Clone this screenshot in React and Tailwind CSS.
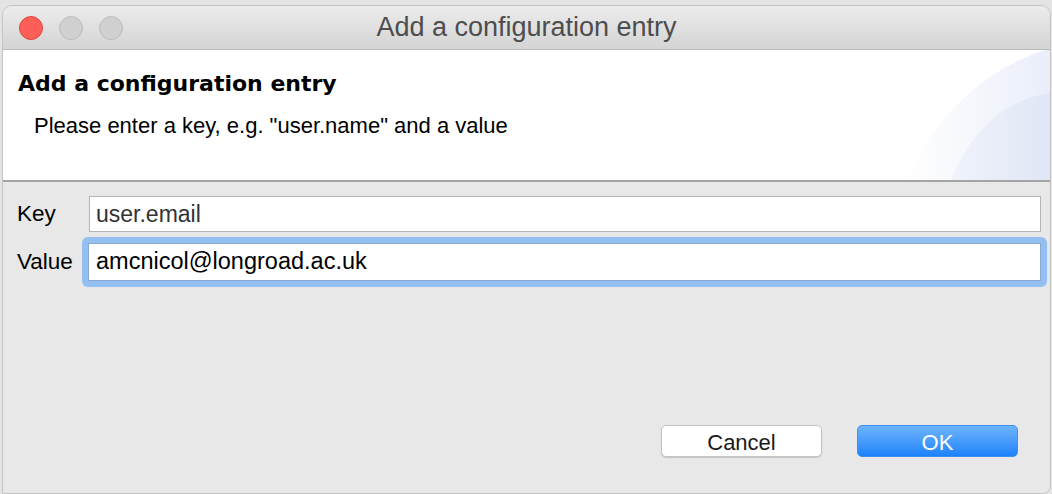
import React from 'react';

const sans = { fontFamily: '"Liberation Sans", Arial, sans-serif' };

function Light({ color, border }) {
  return <span className={`block w-[24px] h-[24px] rounded-full border ${color} ${border}`} />;
}

export default function App() {
  return (
    <div className="w-[1052px] h-[494px] bg-[#e4e4e4] overflow-hidden pt-[5px] pl-[2px]" style={sans}>
      <div className="w-[1049px] h-[489px] flex flex-col rounded-t-[10px] rounded-br-[8px] border border-[#c4c4c4] bg-[#e8e8e8] overflow-hidden">
        {/* title bar */}
        <div className="relative h-[44px] shrink-0 flex items-center bg-gradient-to-b from-[#ececec] to-[#d4d4d4] border-b border-[#b9b9b9]">
          <div className="flex items-center gap-[16px] pl-[16px]">
            <Light color="bg-[#fc5f57]" border="border-[#e0443e]" />
            <Light color="bg-[#d0d0d0]" border="border-[#bdbdbd]" />
            <Light color="bg-[#d0d0d0]" border="border-[#bdbdbd]" />
          </div>
          <div className="absolute inset-0 flex items-center justify-center text-[27px] text-[#4d4d4d] pointer-events-none">
            Add a configuration entry
          </div>
        </div>

        {/* header */}
        <div className="relative h-[132px] shrink-0 bg-white border-b-2 border-[#a4a4a4] overflow-hidden">
          <svg className="absolute right-0 bottom-0" width="145" height="132" viewBox="0 0 145 132" aria-hidden>
            <defs>
              <linearGradient id="g1" x1="0" y1="0" x2="1" y2="0">
                <stop offset="0" stopColor="#ffffff" />
                <stop offset="1" stopColor="#eaeef9" />
              </linearGradient>
              <linearGradient id="g2" x1="0" y1="0" x2="1" y2="0">
                <stop offset="0" stopColor="#f0f3fb" />
                <stop offset="1" stopColor="#e0e6f6" />
              </linearGradient>
            </defs>
            <path d="M0 132 Q 50 30 145 0 L145 132 Z" fill="url(#g1)" />
            <path d="M46 132 Q 78 55 145 45 L145 132 Z" fill="url(#g2)" />
          </svg>
          <div
            className="relative pl-[15px] pt-[23px] text-[22px] font-bold text-black leading-none"
            style={{ fontFamily: '"DejaVu Sans", Verdana, sans-serif' }}
          >
            Add a configuration entry
          </div>
          <div className="relative pl-[31px] pt-[20px] text-[22px] text-black leading-none">
            Please enter a key, e.g. "user.name" and a value
          </div>
        </div>

        {/* form */}
        <div className="flex-1 flex flex-col pl-[14px] pt-[14px]">
          <div className="flex items-center">
            <span className="w-[72px] shrink-0 text-[22.5px] text-black">Key</span>
            <div className="w-[952px] shrink-0 h-[36px] bg-white border border-[#b5b5b5] flex items-center px-[6px] text-[23px] text-[#333333]">
              user.email
            </div>
          </div>
          <div className="flex items-center mt-[5px]">
            <span className="w-[65px] shrink-0 text-[22.5px] text-black">Value</span>
            <div className="w-[965px] shrink-0 h-[50px] rounded-[6px] bg-[#93bff1] p-[6px]">
              <div className="h-full bg-white border border-[#8aa9cf] flex items-center pl-[7px] text-[23.5px] text-black">
                amcnicol@longroad.ac.uk
              </div>
            </div>
          </div>

          <div className="mt-auto mb-[36px] flex justify-end gap-[35px] pr-[32px]">
            <button
              type="button"
              className="w-[161px] h-[32px] rounded-[5px] bg-white border border-[#c3c3c3] shadow-[0_1px_1px_rgba(0,0,0,0.15)] text-[22px] text-[#1a1a1a]"
            >
              Cancel
            </button>
            <button
              type="button"
              className="w-[161px] h-[32px] rounded-[5px] bg-gradient-to-b from-[#6cb4fb] to-[#1a82fb] border border-[#3d8ff0] text-[22px] text-white"
            >
              OK
            </button>
          </div>
        </div>
      </div>
    </div>
  );
}
